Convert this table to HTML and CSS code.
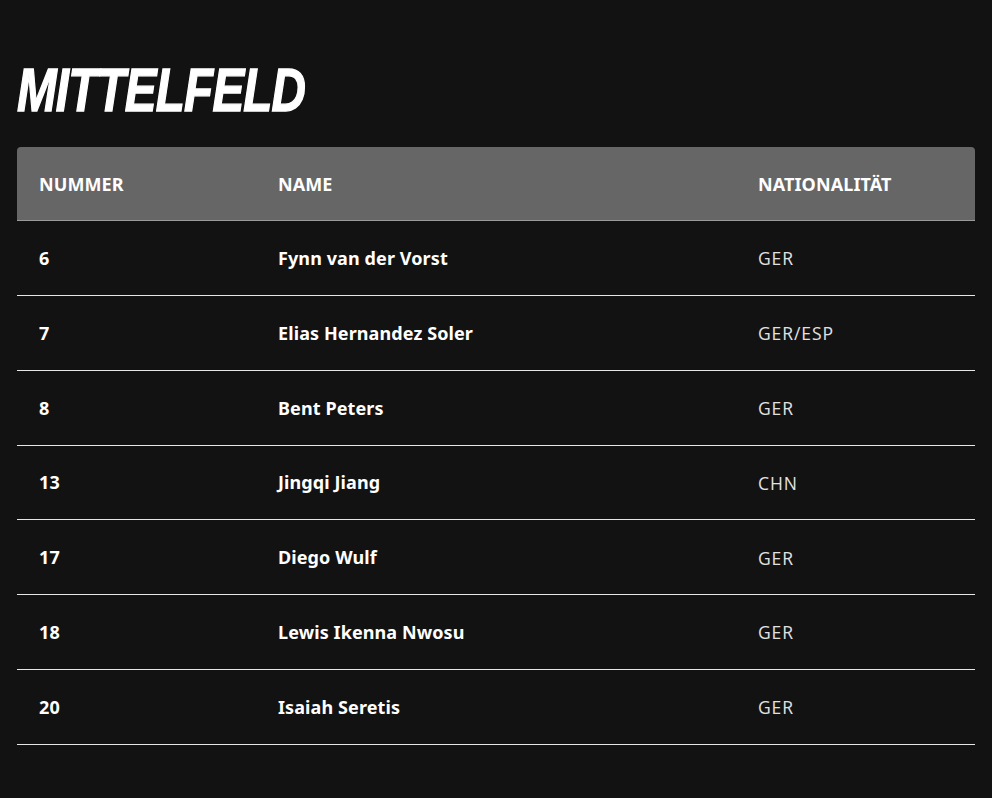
FILE: index.html
```html
<!DOCTYPE html>
<html lang="de">
<head>
<meta charset="utf-8">
<link rel="stylesheet" href="styles.css">
</head>
<body>
<main class="page">
  <h2 class="title">MITTELFELD</h2>
  <div class="squad">
    <div class="row head">
      <div class="cell">NUMMER</div>
      <div class="cell">NAME</div>
      <div class="cell">NATIONALITÄT</div>
    </div>
    <div class="row"><div class="cell num">6</div><div class="cell name">Fynn van der Vorst</div><div class="cell nat">GER</div></div>
    <div class="row"><div class="cell num">7</div><div class="cell name">Elias Hernandez Soler</div><div class="cell nat">GER/ESP</div></div>
    <div class="row"><div class="cell num">8</div><div class="cell name">Bent Peters</div><div class="cell nat">GER</div></div>
    <div class="row"><div class="cell num">13</div><div class="cell name">Jingqi Jiang</div><div class="cell nat">CHN</div></div>
    <div class="row"><div class="cell num">17</div><div class="cell name">Diego Wulf</div><div class="cell nat">GER</div></div>
    <div class="row"><div class="cell num">18</div><div class="cell name">Lewis Ikenna Nwosu</div><div class="cell nat">GER</div></div>
    <div class="row"><div class="cell num">20</div><div class="cell name">Isaiah Seretis</div><div class="cell nat">GER</div></div>
  </div>
</main>
</body>
</html>
```

FILE: styles.css
```css
html, body {
  margin: 0;
  padding: 0;
  background: #121212;
}
body {
  font-family: "Noto Sans", Lato, sans-serif;
  color: #ffffff;
}
.page {
  padding: 0 17px 0 17px;
}
.title {
  margin: 0;
  padding-top: 60px;
  height: 147px;
  box-sizing: border-box;
  font-family: "Liberation Sans", Arial, sans-serif;
  font-weight: 700;
  font-style: italic;
  font-size: 61px;
  line-height: 1;
  letter-spacing: -1px;
  color: #ffffff;
  -webkit-text-stroke: 1.4px #ffffff;
  transform: scaleX(0.78);
  transform-origin: 0 0;
  white-space: nowrap;
}
.squad {
  width: 958px;
}
.row {
  display: grid;
  grid-template-columns: 239px 480px 239px;
  height: 74.85px;
  box-sizing: border-box;
  border-bottom: 1px solid #e6e6e6;
  align-items: center;
}
.row.head {
  height: 74px;
  background: #666666;
  border-radius: 4px 4px 0 0;
  border-bottom: 1px solid #9a9a9a;
}
.cell {
  padding-left: 22px;
  font-size: 18px;
  font-weight: 700;
  line-height: 1;
  letter-spacing: 0.1px;
}
.nat {
  font-family: "Open Sans", "Noto Sans", sans-serif;
  font-weight: 400;
  font-size: 17.5px;
  letter-spacing: 0.9px;
  padding-top: 2px;
  color: #e2e2e2;
}
```
